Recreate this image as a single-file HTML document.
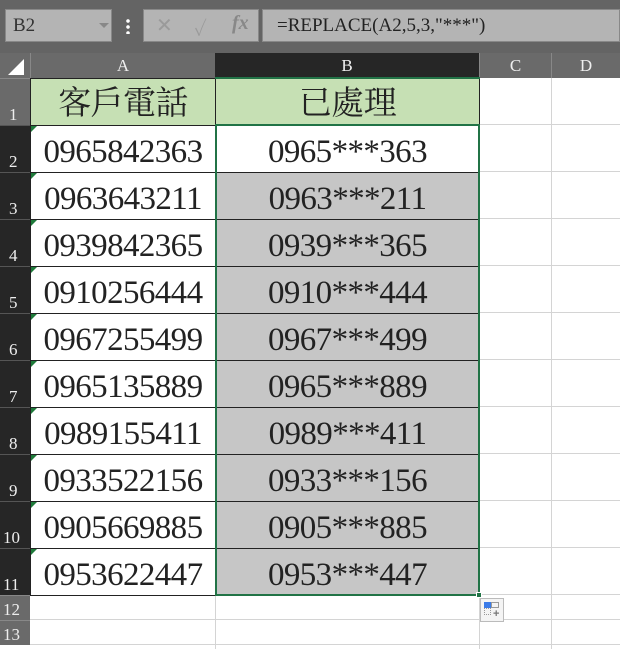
<!DOCTYPE html>
<html><head><meta charset="utf-8"><style>
body{margin:0;width:620px;height:649px;overflow:hidden;background:#fff;position:relative;font-family:"Liberation Serif","Noto Serif CJK TC",serif}
.a{position:absolute;box-sizing:border-box}
.hdr{color:#eee;font-size:17px;text-align:center}
.cell{font-size:33px;color:#222;text-align:center;line-height:53px;letter-spacing:-0.6px}
</style></head><body>
<div class="a" style="left:0;top:0;width:620px;height:53px;background:#646464"></div>
<div class="a" style="left:5px;top:9px;width:107px;height:33px;background:#b4b4b4;border:1px solid #888;font-size:19px;color:#333;padding:5px 0 0 7px">B2<span style="position:absolute;left:93px;top:13px;border:5px solid transparent;border-top:5px solid #888"></span></div>
<div class="a" style="left:126px;top:18px;width:4px;height:16px;background:radial-gradient(circle,#fff 1.6px,transparent 2px) 0 0/4px 6px"></div>
<div class="a" style="left:143px;top:9px;width:116px;height:33px;background:#b4b4b4;border:1px solid #888;color:#9a9a9a;font-size:20px">
<span style="position:absolute;left:12px;top:3px">✕</span><span style="position:absolute;left:50px;top:3px">✓</span><span style="position:absolute;left:88px;top:2px;font-style:italic;font-weight:bold;color:#888">fx</span></div>
<div class="a" style="left:262px;top:9px;width:358px;height:33px;background:#b4b4b4;border:1px solid #888;font-size:19px;color:#222;padding:5px 0 0 14px">=REPLACE(A2,5,3,"***")</div>
<div class="a" style="left:0;top:53px;width:30px;height:25px;background:#6a6a6a"></div>
<div class="a" style="left:8px;top:59px;width:0;height:0;border-left:16px solid transparent;border-bottom:16px solid #fff"></div>
<div class="a hdr" style="left:30px;top:53px;width:185px;height:25px;background:#6a6a6a;border-left:1px solid #888;line-height:26px">A</div>
<div class="a hdr" style="left:215px;top:53px;width:264px;height:25px;background:#262626;line-height:26px">B</div>
<div class="a hdr" style="left:479px;top:53px;width:72px;height:25px;background:#6a6a6a;border-left:1px solid #888;line-height:26px">C</div>
<div class="a hdr" style="left:551px;top:53px;width:69px;height:25px;background:#6a6a6a;border-left:1px solid #888;line-height:26px">D</div>
<div id="g"></div>
<script>
var g='';var A=['0965842363','0963643211','0939842365','0910256444','0967255499','0965135889','0989155411','0933522156','0905669885','0953622447'];
var tops=[78,125,172,219,266,313,360,407,454,501,548,595,620,645];
for(var r=0;r<13;r++){var t=tops[r],h=tops[r+1]-t;var dark=r>=1&&r<=10;
g+='<div class="a hdr" style="left:0;top:'+t+'px;width:30px;height:'+h+'px;background:'+(dark?'#262626':'#6a6a6a')+';border-top:1px solid '+(dark?'#555':'#888')+';text-align:left;padding-left:'+(r>=9?3:9)+'px;line-height:'+(h*2-22)+'px">'+(r+1)+'</div>';
g+='<div class="a" style="left:30px;top:'+t+'px;width:590px;height:'+h+'px;border-bottom:1px solid #d4d4d4"></div>';}
g+='<div class="a" style="left:215px;top:78px;width:1px;height:571px;background:#d4d4d4"></div>';
g+='<div class="a" style="left:479px;top:78px;width:1px;height:571px;background:#d4d4d4"></div>';
g+='<div class="a" style="left:551px;top:78px;width:1px;height:571px;background:#d4d4d4"></div>';
g+='<div class="a cell" style="left:30px;top:78px;width:186px;height:48px;background:#c6e0b4;border:1px solid #222;line-height:50px">客戶電話</div>';
g+='<div class="a cell" style="left:215px;top:78px;width:265px;height:48px;background:#c6e0b4;border:1px solid #222;line-height:50px">已處理</div>';
for(var i=0;i<10;i++){var t=tops[i+1];
g+='<div class="a cell" style="left:30px;top:'+t+'px;width:186px;height:48px;background:#fff;border:1px solid #222">'+A[i]+'</div>';
g+='<div class="a" style="left:31px;top:'+(t+1)+'px;border-right:6px solid transparent;border-top:6px solid #1e7a3a"></div>';
g+='<div class="a cell" style="left:215px;top:'+t+'px;width:265px;height:48px;background:'+(i==0?'#fff':'#c6c6c6')+';border:1px solid #222">'+A[i].slice(0,4)+'***'+A[i].slice(7)+'</div>';}
g+='<div class="a" style="left:215px;top:124px;width:265px;height:472px;border:2px solid #217346"></div>';
g+='<div class="a" style="left:215px;top:77px;width:265px;height:2px;background:#217346"></div>';
g+='<div class="a" style="left:476px;top:592px;width:6px;height:6px;background:#217346;border:1px solid #fff"></div>';
g+='<div class="a" style="left:480px;top:598px;width:24px;height:24px;background:#f4f4f4;border:1px solid #bbb"><div class="a" style="left:3px;top:3px;width:7px;height:6px;background:#3b7be8"></div><div class="a" style="left:10px;top:3px;width:8px;height:6px;border:1px solid #999"></div><div class="a" style="left:3px;top:9px;width:7px;height:7px;border:1px dotted #999"></div><div class="a" style="left:12px;top:9px;color:#777;font:bold 11px sans-serif">+</div></div>';
document.getElementById('g').innerHTML=g;
</script>
</body></html>
